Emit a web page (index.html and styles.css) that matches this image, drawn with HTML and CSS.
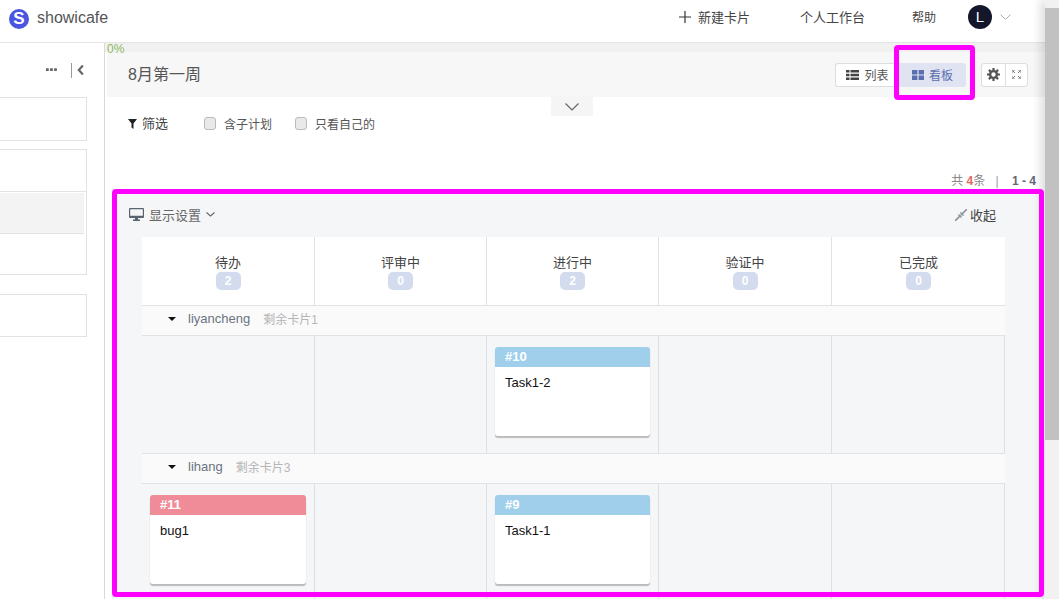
FILE: index.html
```html
<!DOCTYPE html>
<html lang="en">
<head>
  <meta charset="UTF-8">
  <meta name="viewport" content="width=device-width, initial-scale=1.0">
  <title>showicafe</title>
  <link rel="stylesheet" href="styles.css">
</head>
<body>

<div class="page">
  <div class="app">
    <header class="topbar">
      <span class="logo">S</span>
      <span class="brand">showicafe</span>
      <nav class="topnav">
        <a class="nav-new">
          <svg width="12" height="12" viewBox="0 0 12 12"><path d="M6 0v12M0 6h12" stroke="#333" stroke-width="1.2" fill="none"/></svg>
          新建卡片
        </a>
        <a class="nav-work">个人工作台</a>
        <a class="nav-help">帮助</a>
        <span class="avatar">L</span>
        <svg class="avatar-caret" width="11" height="6" viewBox="0 0 11 6"><path d="M.5.5l5 5 5-5" stroke="#aaa" fill="none"/></svg>
      </nav>
    </header>

    <div class="content">
      <aside class="sidebar">
        <div class="side-tools">
          <svg width="12" height="4" viewBox="0 0 12 4"><path d="M0 0h3v3H0zM4.500 0h3v3h-3zM9 0h3v3H9z" fill="#666"/></svg>
          <span class="side-sep"></span>
          <svg width="8" height="12" viewBox="0 0 8 12"><path d="M6.500 1L2 6l4.500 5" stroke="#666" stroke-width="2.400" fill="none"/></svg>
        </div>
        <div class="side-box side-one"></div>
        <div class="side-box side-group">
          <div class="side-row"></div>
          <div class="side-row side-active"></div>
          <div class="side-row"></div>
        </div>
        <div class="side-box side-last"></div>
      </aside>

      <main class="main">
        <div class="progress">0%</div>
        <div class="titlebar">
          <h2 class="title">8月第一周</h2>
          <div class="view-switch">
            <a class="view-btn">
              <svg width="13" height="10" viewBox="0 0 13 10"><path d="M0 0h3.500v2.600H0zM4.500 0H13v2.600H4.500zM0 3.700h3.500v2.600H0zM4.500 3.700H13v2.600H4.500zM0 7.400h3.500V10H0zM4.500 7.400H13V10H4.500z" fill="#444"/></svg>
              列表
            </a>
            <a class="view-btn view-on">
              <svg width="12" height="10" viewBox="0 0 12 10"><path d="M0 0h5.400v4.400H0zM6.600 0H12v4.400H6.600zM0 5.600h5.400V10H0zM6.600 5.600H12V10H6.600z" fill="#5b6fae"/></svg>
              看板
            </a>
          </div>
          <div class="tool-group">
            <a class="tool-btn">
              <svg width="13" height="13" viewBox="0 0 13 13"><circle cx="6.500" cy="6.500" r="3.400" fill="none" stroke="#555" stroke-width="2.400"/><path d="M6.500 0v2.500M6.500 10.500V13M0 6.500h2.500M10.500 6.500H13M1.900 1.900l1.800 1.800M9.300 9.300l1.800 1.800M11.100 1.900L9.300 3.700M3.700 9.300l-1.800 1.800" stroke="#555" stroke-width="2.200"/></svg>
            </a>
            <a class="tool-btn">
              <svg width="9" height="9" viewBox="0 0 9 9"><path d="M0 3V0h3M6 0h3v3M9 6v3H6M3 9H0V6M1 1l2 2M8 1L6 3M8 8L6 6M1 8l2-2" stroke="#777" fill="none"/></svg>
            </a>
          </div>
        </div>
        <div class="fold-row">
          <span class="fold-tab">
            <svg width="14" height="8" viewBox="0 0 14 8"><path d="M.5.500L7 7 13.500.500" stroke="#666" stroke-width="1.200" fill="none"/></svg>
          </span>
        </div>

        <div class="filters">
          <span class="filter-name">
            <svg width="9" height="10" viewBox="0 0 9 10"><path d="M0 0h9L5.500 4.500V10l-2-1.500v-4z" fill="#222"/></svg>
            筛选
          </span>
          <label class="check"><span class="box"></span>含子计划</label>
          <label class="check"><span class="box"></span>只看自己的</label>
        </div>

        <div class="count">共 <b class="num">4</b>条 <span class="bar">|</span> <b class="range">1 - 4</b></div>

        <section class="board">
          <div class="board-top">
            <span class="display">
              <svg width="15" height="13" viewBox="0 0 15 13"><path d="M1 0h13a1 1 0 0 1 1 1v8a1 1 0 0 1-1 1H9v1.500h2V13H4v-1.500h2V10H1a1 1 0 0 1-1-1V1a1 1 0 0 1 1-1zm.2 1.200v6.600h12.600V1.200z" fill="#5a6470"/></svg>
              显示设置
              <svg width="9" height="5" viewBox="0 0 9 5"><path d="M.5.500l4 3.500 4-3.500" stroke="#666" stroke-width="1.100" fill="none"/></svg>
            </span>
            <span class="collapse">
              <svg width="12" height="12" viewBox="0 0 12 12"><path d="M0 12l5-5M7 5l5-5" stroke="#8a929c" stroke-width="1.600"/><path d="M2.500 5.500l4 4 0-4zM5.500 2.500l4 4-4 0z" fill="#8a929c"/></svg>
              收起
            </span>
          </div>

          <div class="grid heads">
            <div class="head">待办<span class="badge">2</span></div>
            <div class="head">评审中<span class="badge">0</span></div>
            <div class="head">进行中<span class="badge">2</span></div>
            <div class="head">验证中<span class="badge">0</span></div>
            <div class="head">已完成<span class="badge">0</span></div>
          </div>

          <div class="lane-head">
            <i class="tri"></i><span class="lane-name">liyancheng</span><span class="lane-left">剩余卡片1</span>
          </div>
          <div class="grid lane">
            <div class="cell"></div>
            <div class="cell"></div>
            <div class="cell">
              <div class="card"><div class="card-id card-task">#10</div><div class="card-text">Task1-2</div></div>
            </div>
            <div class="cell"></div>
            <div class="cell"></div>
          </div>

          <div class="lane-head">
            <i class="tri"></i><span class="lane-name">lihang</span><span class="lane-left">剩余卡片3</span>
          </div>
          <div class="grid lane">
            <div class="cell">
              <div class="card"><div class="card-id card-bug">#11</div><div class="card-text">bug1</div></div>
            </div>
            <div class="cell"></div>
            <div class="cell">
              <div class="card"><div class="card-id card-task">#9</div><div class="card-text">Task1-1</div></div>
            </div>
            <div class="cell"></div>
            <div class="cell"></div>
          </div>
        </section>
      </main>
    </div>
  </div>

  <div class="scrollbar"><div class="thumb"></div></div>

  <!-- annotation frames drawn over the screenshot -->
  <div class="mark mark-view"></div>
  <div class="mark mark-board"></div>
</div>

</body>
</html>
```

FILE: styles.css
```css
* {
  box-sizing: border-box;
}
html, body {
  margin: 0;
  height: 100%;
  overflow: hidden;
}
body {
  font-family: "Liberation Sans", "Noto Sans CJK SC", sans-serif;
  font-size: 12px;
  color: #333;
  background: #fff;
}
.page {
  position: relative;
  display: flex;
  height: 599px;
  overflow: hidden;
}
.app {
  flex: 1;
  min-width: 0;
  display: flex;
  flex-direction: column;
}

/* top bar */
.topbar {
  flex: none;
  height: 43px;
  display: flex;
  align-items: center;
  padding: 0 34px 8px 9px;
  border-bottom: 1px solid #e4e4e4;
}
.logo {
  width: 20px;
  height: 20px;
  margin-top: 4px;
  border-radius: 50%;
  background: #4a55e0;
  color: #fff;
  font-size: 17px;
  font-weight: bold;
  line-height: 20px;
  text-align: center;
}
.brand {
  margin: 2px 0 0 8px;
  font-size: 16px;
  color: #555;
}
.topnav {
  margin-left: auto;
  display: flex;
  align-items: center;
  font-size: 13px;
  color: #444;
}
.nav-new {
  display: flex;
  align-items: center;
  gap: 7px;
  padding-bottom: 2px;
}
.nav-new svg {
  margin-top: 2px;
}
.nav-work {
  margin-left: 50px;
  padding-bottom: 2px;
}
.nav-help {
  margin-left: 47px;
  padding-bottom: 2px;
  font-size: 12px;
}
.avatar {
  margin-left: 32px;
  width: 24px;
  height: 24px;
  border-radius: 50%;
  background: #14172b;
  color: #fff;
  font-size: 15px;
  line-height: 24px;
  text-align: center;
}
.avatar-caret {
  margin-left: 8px;
}

.content {
  flex: 1;
  min-height: 0;
  display: flex;
}

/* left list, cut off by the window */
.sidebar {
  flex: none;
  width: 105px;
  border-right: 1px solid #d9d9d9;
}
.side-tools {
  height: 54px;
  padding: 0 20px 0 46px;
  display: flex;
  align-items: center;
  gap: 14px;
}
.side-sep {
  width: 1px;
  height: 15px;
  margin-right: -9px;
  background: #999;
}
.side-box {
  width: 87px;
  background: #fff;
  border: 1px solid #e2e2e2;
  border-left: 0;
}
.side-one {
  height: 44px;
}
.side-group {
  margin-top: 8px;
  height: 126px;
}
.side-row {
  height: 42px;
  border-bottom: 1px solid #e2e2e2;
}
.side-row:last-child {
  border-bottom: 0;
}
.side-active {
  margin: 1px 2px 0 0;
  height: 41px;
  background: #f3f3f3;
}
.side-last {
  margin-top: 19px;
  height: 43px;
}

/* main column */
.main {
  flex: 1;
  min-width: 0;
}
.progress {
  height: 9px;
  background: #f1f1f1;
  color: #8fb85f;
  font-size: 12px;
  line-height: 12px;
  padding-left: 2px;
}
.titlebar {
  height: 45px;
  margin-left: 2px;
  padding: 0 17px 0 21px;
  background: #f7f7f7;
  display: flex;
  align-items: center;
}
.title {
  margin: 0 auto 4px 0;
  font-size: 16px;
  font-weight: normal;
  color: #555;
}
.view-switch {
  display: flex;
  height: 24px;
}
.view-btn {
  width: 64px;
  display: flex;
  align-items: center;
  justify-content: center;
  gap: 5px;
  background: #fff;
  border: 1px solid #ddd;
  border-right: 0;
  border-radius: 3px 0 0 3px;
  color: #555;
}
.view-on {
  width: 67px;
  background: #dfe3f2;
  border: 0;
  border-radius: 0 3px 3px 0;
  color: #5b6fae;
}
.tool-group {
  margin-left: 15px;
  display: flex;
  height: 24px;
  background: #fff;
  border: 1px solid #ddd;
  border-radius: 3px;
}
.tool-btn {
  width: 23px;
  display: flex;
  align-items: center;
  justify-content: center;
}
.tool-btn + .tool-btn {
  width: 22px;
  border-left: 1px solid #ddd;
}
.fold-row {
  height: 19px;
  display: flex;
  justify-content: center;
  padding-right: 6px;
}
.fold-tab {
  width: 42px;
  background: #f5f5f5;
  display: flex;
  align-items: center;
  justify-content: center;
}
.filters {
  height: 18px;
  margin-top: -2px;
  padding-left: 23px;
  display: flex;
  align-items: center;
}
.filter-name {
  width: 76px;
  margin-top: -2px;
  display: flex;
  align-items: center;
  gap: 5px;
  font-size: 13px;
  color: #444;
}
.filter-name svg {
  margin-top: 4px;
}
.check {
  display: flex;
  align-items: center;
  width: 91px;
  color: #555;
}
.box {
  width: 12px;
  height: 13px;
  margin-right: 8px;
  background: #e9e9e9;
  border: 1px solid #bbb;
  border-radius: 3px;
}
.count {
  margin-top: 40px;
  height: 18px;
  padding-right: 9px;
  text-align: right;
  color: #888;
  line-height: 18px;
}
.num {
  color: #e2685e;
}
.bar {
  margin: 0 10px 0 7px;
  color: #99a;
}
.range {
  color: #667;
}

/* kanban */
.board {
  margin: 2px 0 0 7px;
  width: 932px;
  height: 420px;
  padding: 0 39px 0 30px;
  background: #f5f6f8;
}
.board-top {
  height: 45px;
  margin-left: -13px;
  padding: 0 9px 0 0;
  display: flex;
  align-items: center;
  justify-content: space-between;
  color: #666;
  font-size: 13px;
}
.display {
  display: flex;
  align-items: center;
  gap: 5px;
}
.collapse {
  display: flex;
  align-items: center;
  gap: 3px;
  color: #444;
}
.grid {
  display: grid;
  grid-template-columns: 173px 172px 172px 173px 173px;
}
.heads {
  height: 68px;
  background: #fff;
}
.head {
  display: flex;
  flex-direction: column;
  align-items: center;
  padding-top: 17px;
  font-size: 13px;
  line-height: 18px;
  color: #444;
  border-right: 1px solid #e2e2e2;
}
.head:last-child {
  border-right: 0;
}
.badge {
  width: 25px;
  height: 18px;
  border-radius: 5px;
  background: #d3dcee;
  color: #fff;
  font-size: 12px;
  font-weight: bold;
  text-align: center;
}
.lane-head {
  height: 31px;
  padding: 0 0 4px 26px;
  display: flex;
  align-items: center;
  background: #fafafa;
  border-top: 1px solid #e2e2e2;
  border-bottom: 1px solid #e2e2e2;
}
.tri {
  width: 0;
  height: 0;
  border: 4px solid transparent;
  border-top: 4px solid #111;
  border-bottom: 0;
  margin-right: 12px;
}
.lane-name {
  font-size: 13px;
  color: #6b7480;
  margin-right: 13px;
}
.lane-left {
  color: #b5b5b5;
}
.lane {
  height: 117px;
}
.cell {
  padding: 11px 8px 0;
  border-right: 1px solid #dcdfe3;
}
.card {
  height: 89px;
  background: #fff;
  border-radius: 3px;
  box-shadow: 0 2px 1px #bbb;
  overflow: hidden;
}
.card-id {
  height: 20px;
  padding-left: 10px;
  color: #fff;
  font-size: 13px;
  font-weight: bold;
  line-height: 20px;
}
.card-task {
  background: #a0cfec;
}
.card-bug {
  background: #f08c98;
}
.card-text {
  padding: 8px 10px;
  color: #111;
  font-size: 13px;
  line-height: 16px;
}

/* scrollbar */
.scrollbar {
  flex: none;
  width: 14px;
  padding-top: 8px;
  background: #f1f1f1;
  box-shadow: -5px 0 8px rgba(0, 0, 0, .12);
  z-index: 1;
}
.thumb {
  height: 432px;
  background: #c1c1c1;
}

/* annotation frames */
.mark {
  position: absolute;
  z-index: 2;
  border: 5px solid #ff00ff;
  border-radius: 4px;
}
.mark-view {
  left: 894px;
  top: 45px;
  width: 81px;
  height: 55px;
}
.mark-board {
  left: 112px;
  top: 189px;
  width: 932px;
  height: 408px;
}
```
